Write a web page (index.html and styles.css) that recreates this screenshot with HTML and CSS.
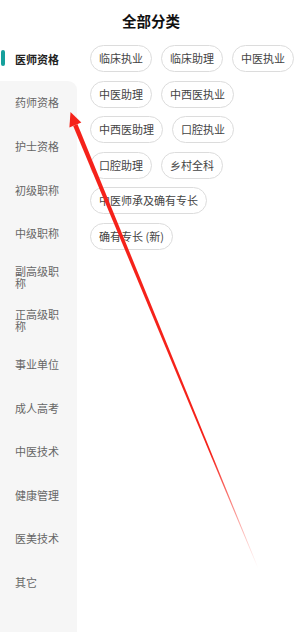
FILE: index.html
```html
<!DOCTYPE html>
<html lang="zh-CN">
<head>
    <meta charset="UTF-8">
    <meta name="viewport" content="width=device-width, initial-scale=1.0">
    <title>全部分类</title>
    <link rel="stylesheet" href="styles.css">
</head>
<body>
    <header class="page-header">
        <h1>全部分类</h1>
    </header>
    <div class="main">
        <nav class="side-nav">
            <a class="nav-item active" href="#">医师资格</a>
            <a class="nav-item after-active" href="#">药师资格</a>
            <a class="nav-item" href="#">护士资格</a>
            <a class="nav-item" href="#">初级职称</a>
            <a class="nav-item" href="#">中级职称</a>
            <a class="nav-item" href="#">副高级职称</a>
            <a class="nav-item" href="#">正高级职称</a>
            <a class="nav-item" href="#">事业单位</a>
            <a class="nav-item" href="#">成人高考</a>
            <a class="nav-item" href="#">中医技术</a>
            <a class="nav-item" href="#">健康管理</a>
            <a class="nav-item" href="#">医美技术</a>
            <a class="nav-item" href="#">其它</a>
            <div class="nav-fill"></div>
        </nav>
        <section class="tags">
            <a class="tag" href="#">临床执业</a>
            <a class="tag" href="#">临床助理</a>
            <a class="tag" href="#">中医执业</a>
            <a class="tag" href="#">中医助理</a>
            <a class="tag" href="#">中西医执业</a>
            <a class="tag" href="#">中西医助理</a>
            <a class="tag" href="#">口腔执业</a>
            <a class="tag" href="#">口腔助理</a>
            <a class="tag" href="#">乡村全科</a>
            <a class="tag" href="#">中医师承及确有专长</a>
            <a class="tag" href="#">确有专长 (新)</a>
        </section>
    </div>
    <!-- 截图上的标注箭头 -->
    <svg class="mark" width="302" height="632" viewBox="0 0 302 632">
        <defs>
            <linearGradient id="fade" gradientUnits="userSpaceOnUse" x1="75" y1="125" x2="258" y2="568">
                <stop offset="0" stop-color="#f5221a"/>
                <stop offset="0.74" stop-color="#f5221a"/>
                <stop offset="1" stop-color="#f5221a" stop-opacity="0"/>
            </linearGradient>
        </defs>
        <polygon points="77.4,124.1 73.2,125.9 257.7,568.1 258.3,567.9" fill="url(#fade)"/>
        <polygon points="70.5,112 81.3,122.6 69.4,127.4" fill="#f5221a"/>
    </svg>
</body>
</html>
```

FILE: styles.css
```css
html, body {
    margin: 0;
    padding: 0;
    height: 100%;
}
body {
    font-family: "Noto Sans CJK SC", "Noto Sans", sans-serif;
    background-color: #fff;
    color: #333;
    display: flex;
    flex-direction: column;
    overflow: hidden;
}
.page-header {
    height: 33px;
    padding-top: 4px;
    text-align: center;
}
.page-header h1 {
    margin: 0;
    font-size: 14.5px;
    line-height: 33px;
    font-weight: bold;
    color: #111;
}
.main {
    flex: 1;
    display: flex;
    min-height: 0;
}
.side-nav {
    width: 77px;
    display: flex;
    flex-direction: column;
    flex-shrink: 0;
}
.nav-item {
    position: relative;
    height: 43.6px;
    box-sizing: border-box;
    display: flex;
    align-items: center;
    padding: 0 12px 0 15px;
    background-color: #f6f6f6;
    color: #666;
    font-size: 11px;
    line-height: 12px;
    text-decoration: none;
    flex-shrink: 0;
}
.nav-item.active {
    background-color: #fff;
    color: #222;
    font-weight: bold;
}
.nav-item.active::before {
    content: '';
    position: absolute;
    left: 1px;
    top: 13px;
    width: 4px;
    height: 16px;
    border-radius: 2px;
    background-color: #16a09c; /* 主题色 */
}
.nav-item.after-active {
    border-top-right-radius: 9px;
}
.nav-fill {
    flex: 1;
    background-color: #f6f6f6;
}
.tags {
    flex: 1;
    display: flex;
    flex-wrap: wrap;
    align-content: flex-start;
    gap: 8.5px 9px;
    padding: 8px 8px 0 13px;
}
.tag {
    height: 27px;
    box-sizing: border-box;
    border: 1px solid #dcdcdc;
    border-radius: 14px;
    padding: 0 8px;
    font-size: 11px;
    line-height: 25px;
    color: #444;
    text-decoration: none;
    white-space: nowrap;
}
.mark {
    position: absolute;
    left: 0;
    top: 0;
    pointer-events: none;
}
```
